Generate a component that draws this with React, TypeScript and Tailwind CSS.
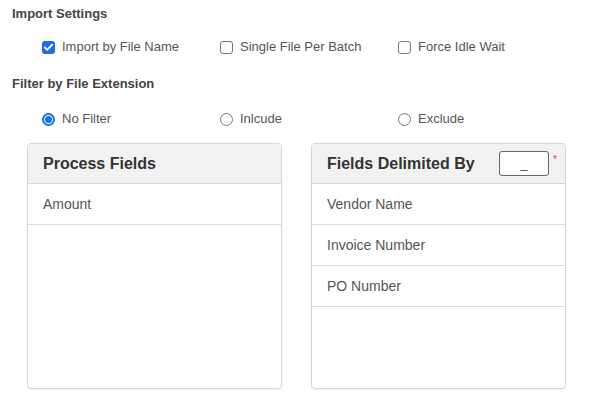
import { Check } from "lucide-react";

type Option = { label: string; checked: boolean };

const importOptions: Option[] = [
  { label: "Import by File Name", checked: true },
  { label: "Single File Per Batch", checked: false },
  { label: "Force Idle Wait", checked: false },
];

const filterOptions: Option[] = [
  { label: "No Filter", checked: true },
  { label: "Inlcude", checked: false },
  { label: "Exclude", checked: false },
];

function CheckBox({ checked }: { checked: boolean }) {
  return checked ? (
    <span className="flex h-[13px] w-[13px] items-center justify-center rounded-[3px] bg-[#1b6ee6]">
      <Check size={11} strokeWidth={4} className="text-white" />
    </span>
  ) : (
    <span className="h-[13px] w-[13px] rounded-[3px] border border-[#777] bg-white" />
  );
}

function Radio({ checked }: { checked: boolean }) {
  return checked ? (
    <span className="flex h-[13px] w-[13px] items-center justify-center rounded-full border-2 border-[#1b6ee6] bg-white">
      <span className="h-[7px] w-[7px] rounded-full bg-[#1b6ee6]" />
    </span>
  ) : (
    <span className="h-[13px] w-[13px] rounded-full border border-[#777] bg-white" />
  );
}

function OptionRow({ options, kind }: { options: Option[]; kind: "check" | "radio" }) {
  return (
    <div className="grid grid-cols-[178px_178px_178px] pl-[42px]">
      {options.map((o) => (
        <label key={o.label} className="flex items-center gap-[7px] text-[13px] leading-[16px] text-[#555]">
          {kind === "check" ? <CheckBox checked={o.checked} /> : <Radio checked={o.checked} />}
          {o.label}
        </label>
      ))}
    </div>
  );
}

function FieldPanel({ title, rows, extra }: { title: string; rows: string[]; extra?: React.ReactNode }) {
  return (
    <div className="flex h-[246px] w-[255px] flex-col overflow-hidden rounded-[4px] border border-[#d6d6d6] shadow-[0_1px_1px_rgba(0,0,0,0.06)]">
      <div className="flex h-[40px] shrink-0 items-center justify-between border-b border-[#d6d6d6] bg-[#f2f2f2] pl-[15px] pr-[18px]">
        <span className="text-[16px] font-semibold text-[#333]">{title}</span>
        {extra}
      </div>
      {rows.map((r) => (
        <div key={r} className="flex h-[41px] shrink-0 items-center border-b border-[#dcdcdc] pl-[15px] text-[14px] text-[#555]">
          {r}
        </div>
      ))}
    </div>
  );
}

export default function App() {
  return (
    <div className="h-[404px] w-[590px] bg-white font-['Liberation_Sans',Arial,sans-serif]">
      <div className="flex flex-col pt-[6px]">
        <h2 className="pl-[12px] text-[13px] font-bold leading-[16px] text-[#444]">Import Settings</h2>
        <div className="mt-[17px]">
          <OptionRow options={importOptions} kind="check" />
        </div>
        <h2 className="mt-[21px] pl-[12px] text-[13px] font-bold leading-[16px] text-[#444]">Filter by File Extension</h2>
        <div className="mt-[19px]">
          <OptionRow options={filterOptions} kind="radio" />
        </div>
        <div className="mt-[16px] flex gap-[29px] pl-[27px]">
          <FieldPanel title="Process Fields" rows={["Amount"]} />
          <FieldPanel
            title="Fields Delimited By"
            rows={["Vendor Name", "Invoice Number", "PO Number"]}
            extra={
              <div className="relative -mr-[2px]">
                <input
                  defaultValue="_"
                  className="h-[25px] w-[50px] rounded-[3px] border border-[#666] bg-white text-center text-[13px] text-[#444] outline-none"
                />
                <span className="absolute -right-[8px] top-[1px] text-[10px] text-[#e33]">*</span>
              </div>
            }
          />
        </div>
      </div>
    </div>
  );
}
